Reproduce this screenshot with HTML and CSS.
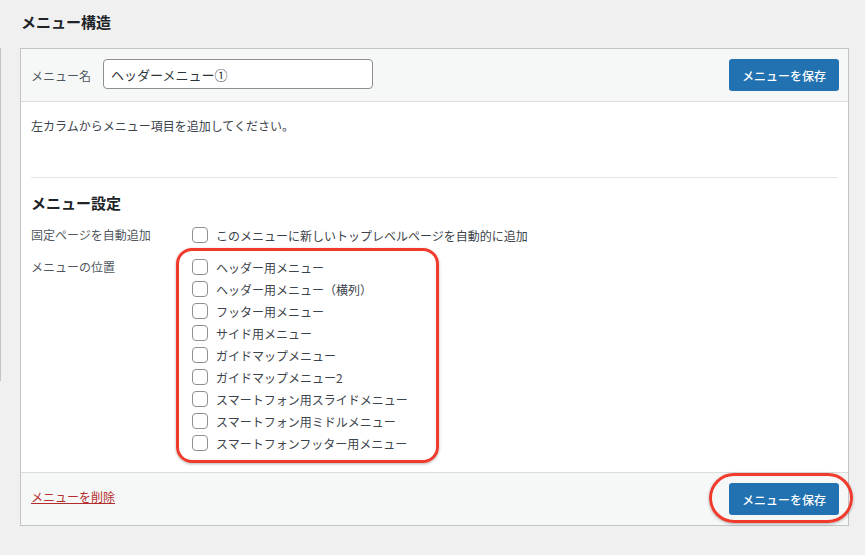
FILE: index.html
```html
<!DOCTYPE html>
<html lang="ja">
<head>
<meta charset="utf-8">
<title>メニュー構造</title>
<link rel="stylesheet" href="styles.css">
</head>
<body>
<div class="screen">
  <div class="sidebar-edge"></div>
  <div class="main">
    <h2 class="title">メニュー構造</h2>
    <div class="panel">
      <div class="panel-head">
        <label class="name-label">メニュー名</label>
        <input class="name-input" type="text" value="ヘッダーメニュー①">
        <button class="btn-primary">メニューを保存</button>
      </div>
      <div class="panel-body">
        <p class="hint">左カラムからメニュー項目を追加してください。</p>
        <div class="divider"></div>
        <h3 class="settings-title">メニュー設定</h3>
        <div class="setting-row">
          <div class="setting-label">固定ページを自動追加</div>
          <div class="setting-options">
            <label class="option"><span class="checkbox"></span>このメニューに新しいトップレベルページを自動的に追加</label>
          </div>
        </div>
        <div class="setting-row locations">
          <div class="setting-label">メニューの位置</div>
          <div class="setting-options">
            <label class="option"><span class="checkbox"></span>ヘッダー用メニュー</label>
            <label class="option"><span class="checkbox"></span>ヘッダー用メニュー（横列）</label>
            <label class="option"><span class="checkbox"></span>フッター用メニュー</label>
            <label class="option"><span class="checkbox"></span>サイド用メニュー</label>
            <label class="option"><span class="checkbox"></span>ガイドマップメニュー</label>
            <label class="option"><span class="checkbox"></span>ガイドマップメニュー2</label>
            <label class="option"><span class="checkbox"></span>スマートフォン用スライドメニュー</label>
            <label class="option"><span class="checkbox"></span>スマートフォン用ミドルメニュー</label>
            <label class="option"><span class="checkbox"></span>スマートフォンフッター用メニュー</label>
          </div>
        </div>
      </div>
      <div class="panel-foot">
        <a class="delete-link" href="#">メニューを削除</a>
        <button class="btn-primary">メニューを保存</button>
      </div>
      <div class="highlight highlight-locations"></div>
      <div class="highlight highlight-save"></div>
    </div>
  </div>
</div>
</body>
</html>
```

FILE: styles.css
```css
* { box-sizing: border-box; }

html, body {
  margin: 0;
  padding: 0;
  background: #f0f0f1;
  font-family: "Noto Sans CJK JP", "Liberation Sans", sans-serif;
  font-size: 12px;
  color: #3c434a;
}

.screen {
  display: flex;
  align-items: flex-start;
  width: 865px;
  height: 555px;
  overflow: hidden;
}

.sidebar-edge {
  width: 1px;
  height: 333px;
  margin-top: 48px;
  background: #c3c4c7;
  flex: none;
}

.main {
  margin-left: 19px;
  width: 829px;
  flex: none;
}

.title {
  margin: 12px 0 16px 1px;
  font-size: 15px;
  line-height: 20px;
  font-weight: 700;
  color: #1d2327;
}

.panel {
  position: relative;
  border: 1px solid #c3c4c7;
  background: #fff;
}

.panel-head {
  display: flex;
  align-items: center;
  height: 53px;
  padding: 0 9px 0 10px;
  background: #f6f7f7;
  border-bottom: 1px solid #dcdcde;
}

.name-label {
  color: #50575e;
  margin-right: 12px;
}

.name-input {
  width: 270px;
  height: 30px;
  border: 1px solid #8c8f94;
  border-radius: 4px;
  padding: 0 7px;
  font-family: inherit;
  font-size: 13px;
  color: #2c3338;
  background: #fff;
  margin-top: -2px;
}

.btn-primary {
  margin-left: auto;
  width: 110px;
  height: 32px;
  border: 0;
  border-radius: 3px;
  background: #2271b1;
  color: #fff;
  font-family: inherit;
  font-size: 12px;
  font-weight: 500;
  padding: 0;
}

.panel-body {
  padding: 15px 10px 18px 10px;
  height: 370px;
}

.hint {
  margin: 0;
  line-height: 18px;
  color: #3c434a;
}

.divider {
  height: 1px;
  background: #e6e6e8;
  margin-top: 42px;
}

.settings-title {
  margin: 15px 0 0;
  font-size: 15px;
  line-height: 20px;
  font-weight: 700;
  color: #1d2327;
}

.setting-row {
  display: flex;
  margin-top: 11px;
}

.setting-row.locations {
  margin-top: 10px;
}

.setting-label {
  width: 161px;
  flex: none;
  line-height: 22px;
  color: #50575e;
}

.setting-options {
  display: flex;
  flex-direction: column;
}

.option {
  display: flex;
  align-items: center;
  height: 22px;
  color: #3c434a;
}

.checkbox {
  width: 16px;
  height: 16px;
  border: 1px solid #8c8f94;
  border-radius: 4px;
  background: #fff;
  margin-right: 8px;
  flex: none;
}

.panel-foot {
  display: flex;
  align-items: center;
  height: 53px;
  padding: 0 9px 0 10px;
  background: #f6f7f7;
  border-top: 1px solid #dcdcde;
}

.delete-link {
  color: #b32d2e;
  text-decoration: underline;
  margin-top: -5px;
}

.highlight {
  position: absolute;
  border: 3px solid #f03a2b;
  box-shadow: 0 1px 3px rgba(0, 0, 0, 0.3);
  pointer-events: none;
}

.highlight-locations {
  left: 155px;
  top: 199px;
  width: 263px;
  height: 215px;
  border-radius: 16px;
}

.highlight-save {
  left: 688px;
  top: 424px;
  width: 144px;
  height: 50px;
  border-radius: 25px;
}
```
